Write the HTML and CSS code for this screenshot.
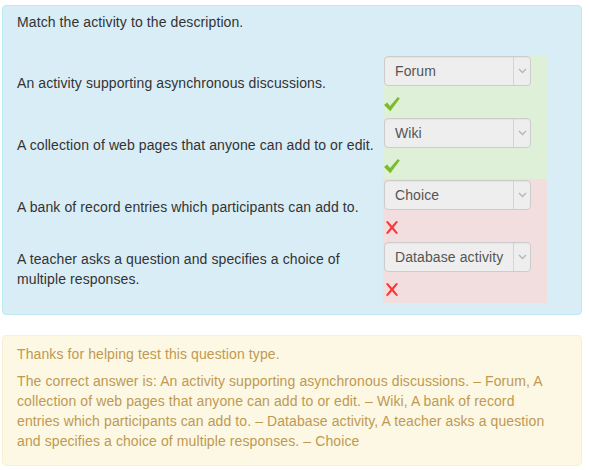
FILE: index.html
```html
<!DOCTYPE html>
<html>
<head>
<meta charset="utf-8">
<link rel="stylesheet" href="styles.css">
</head>
<body>
<div class="formulation">
  <div class="qtext">Match the activity to the description.</div>
  <table class="answer">
    <tr>
      <td class="text">An activity supporting asynchronous discussions.</td>
      <td class="control correct">
        <div class="select"><span class="label">Forum</span><span class="arrow"><svg width="9" height="6" viewBox="0 0 9 6"><polyline points="1,1 4.5,4.5 8,1" fill="none" stroke="#b5b5b5" stroke-width="1.3"/></svg></span></div>
        <div class="icon"><svg width="16" height="16" viewBox="0 0 16 16"><path d="M0 9 L3.2 6.6 L6 10 L13.8 1 L15.8 2.6 L6.3 15.2 Z" fill="#7cbb2b"/></svg></div>
      </td>
    </tr>
    <tr>
      <td class="text">A collection of web pages that anyone can add to or edit.</td>
      <td class="control correct">
        <div class="select"><span class="label">Wiki</span><span class="arrow"><svg width="9" height="6" viewBox="0 0 9 6"><polyline points="1,1 4.5,4.5 8,1" fill="none" stroke="#b5b5b5" stroke-width="1.3"/></svg></span></div>
        <div class="icon"><svg width="16" height="16" viewBox="0 0 16 16"><path d="M0 9 L3.2 6.6 L6 10 L13.8 1 L15.8 2.6 L6.3 15.2 Z" fill="#7cbb2b"/></svg></div>
      </td>
    </tr>
    <tr>
      <td class="text">A bank of record entries which participants can add to.</td>
      <td class="control incorrect">
        <div class="select"><span class="label">Choice</span><span class="arrow"><svg width="9" height="6" viewBox="0 0 9 6"><polyline points="1,1 4.5,4.5 8,1" fill="none" stroke="#b5b5b5" stroke-width="1.3"/></svg></span></div>
        <div class="icon"><svg class="cross" width="16" height="16" viewBox="0 0 16 16"><path d="M1 1.5 L3.2 0.5 L8 6 L12.8 0.5 L15 1.5 L9.8 8 L15 14.5 L12.8 15.5 L8 10 L3.2 15.5 L1 14.5 L6.2 8 Z" fill="#f43c3c"/></svg></div>
      </td>
    </tr>
    <tr>
      <td class="text">A teacher asks a question and specifies a choice of multiple responses.</td>
      <td class="control incorrect">
        <div class="select"><span class="label">Database activity</span><span class="arrow"><svg width="9" height="6" viewBox="0 0 9 6"><polyline points="1,1 4.5,4.5 8,1" fill="none" stroke="#b5b5b5" stroke-width="1.3"/></svg></span></div>
        <div class="icon"><svg class="cross" width="16" height="16" viewBox="0 0 16 16"><path d="M1 1.5 L3.2 0.5 L8 6 L12.8 0.5 L15 1.5 L9.8 8 L15 14.5 L12.8 15.5 L8 10 L3.2 15.5 L1 14.5 L6.2 8 Z" fill="#f43c3c"/></svg></div>
      </td>
    </tr>
  </table>
</div>
<div class="outcome">
  <p class="generalfeedback">Thanks for helping test this question type.</p>
  <p class="rightanswer">The correct answer is: An activity supporting asynchronous discussions. – Forum, A collection of web pages that anyone can add to or edit. – Wiki, A bank of record entries which participants can add to. – Database activity, A teacher asks a question and specifies a choice of multiple responses. – Choice</p>
</div>
</body>
</html>
```

FILE: styles.css
```css
body {
  margin: 5px 7px 0 2px;
  font-family: "Liberation Sans", Arial, Helvetica, sans-serif;
  font-size: 14px;
  line-height: 20px;
  letter-spacing: 0.1px;
  color: #333;
  background: #fff;
}

.formulation {
  background: #d9edf7;
  border: 1px solid #bce8f1;
  border-radius: 4px;
  padding: 6px 14px 11px 14px;
  color: #333;
}

.qtext {
  margin-bottom: 23px;
}

.answer {
  border-collapse: collapse;
  border-spacing: 0;
}

.answer td {
  padding: 0;
}

.answer .text {
  width: 358px;
  padding: 0 8px 6px 0;
  vertical-align: middle;
}

.answer .control {
  width: 148px;
  padding: 1px 15px 0 1px;
  vertical-align: top;
}

.control.correct {
  background: #dff0d8;
}

.control.incorrect {
  background: #f2dede;
}

.select {
  display: flex;
  box-sizing: border-box;
  width: 147px;
  height: 30px;
  border: 1px solid #ccc;
  border-radius: 4px;
  background: #eeeeee;
  color: #555;
  margin-bottom: 10px;
  box-shadow: inset 0 1px 1px rgba(0,0,0,0.04);
}

.select .label {
  flex: 1;
  padding-left: 10px;
  line-height: 28px;
  white-space: nowrap;
}

.select .arrow {
  width: 16px;
  border-left: 1px solid #d4d4d4;
  display: flex;
  align-items: center;
  justify-content: center;
}

.icon {
  height: 21px;
}

.icon svg {
  display: block;
  margin-top: 2px;
}

.icon svg.cross {
  margin-left: 1px;
  width: 14px;
  height: 15px;
}

.outcome {
  margin-top: 20px;
  background: #fcf8e3;
  border: 1px solid #fbeed5;
  border-radius: 4px;
  padding: 8px 28px 14px 14px;
  color: #c09853;
}

.outcome p {
  margin: 0;
}

.outcome .rightanswer {
  margin-top: 7px;
}
```
